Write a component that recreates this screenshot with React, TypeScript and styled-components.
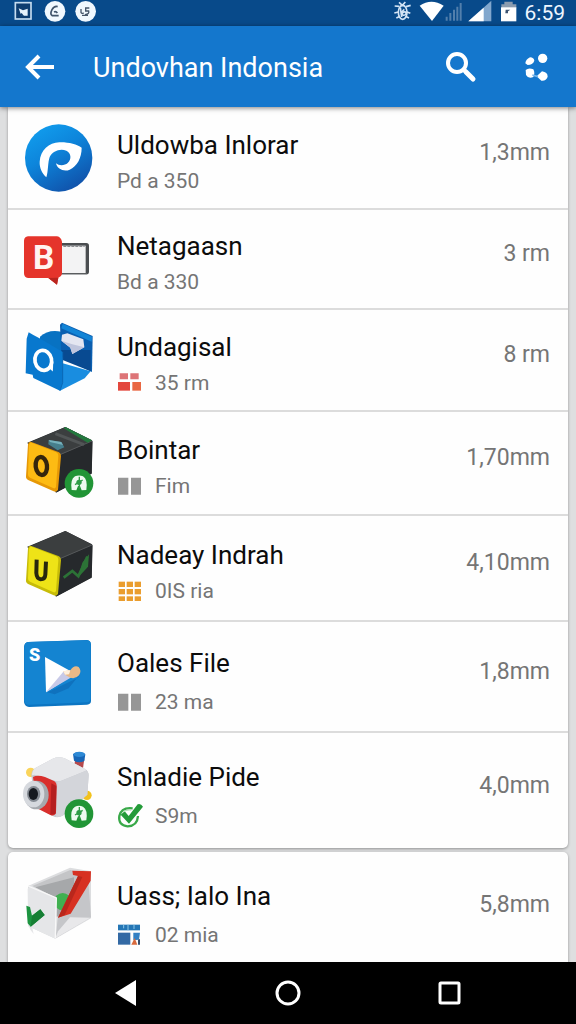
import React from 'react';
import styled, { createGlobalStyle } from 'styled-components';

const GlobalStyle = createGlobalStyle`
  *, *::before, *::after { box-sizing: border-box; }
  body {
    margin: 0;
    background: #dedfe0;
    font-family: Roboto, "Liberation Sans", sans-serif;
  }
`;

const Screen = styled.div`
  display: flex;
  flex-direction: column;
  height: 100vh;
  overflow: hidden;
`;

const StatusBar = styled.div`
  flex: none;
  display: flex;
  align-items: center;
  justify-content: space-between;
  height: 26px;
  padding: 0 11px 0 13px;
  background: #084a8a;
  color: #eef6ff;
`;

const StatusGroup = styled.div<{ $gap?: number }>`
  display: flex;
  align-items: center;
  gap: ${(p) => p.$gap ?? 0}px;
`;

const Clock = styled.time`
  width: 43px;
  text-align: right;
  font-size: 21px;
  line-height: 24px;
  white-space: nowrap;
`;

const AppBar = styled.header`
  flex: none;
  position: relative;
  z-index: 1;
  display: flex;
  align-items: center;
  height: 81px;
  padding: 0 15px 0 16px;
  background: #1477cd;
  box-shadow: 0 1px 5px rgba(0, 0, 0, 0.5);
  color: #fff;
`;

const AppTitle = styled.h1`
  flex: 1;
  margin: 0 0 0 29px;
  padding-top: 2px;
  font-size: 27px;
  line-height: 36px;
  font-weight: 400;
  white-space: nowrap;
`;

const IconButton = styled.button`
  display: grid;
  place-items: center;
  width: 48px;
  height: 48px;
  padding: 0;
  border: 0;
  background: none;
  color: inherit;
  cursor: pointer;
`;

const Actions = styled.div`
  display: flex;
  gap: 28px;
`;

const Content = styled.main`
  flex: 1;
  min-height: 0;
  overflow: hidden;
  padding: 0 8px;
`;

const Card = styled.ul<{ $first?: boolean }>`
  list-style: none;
  margin: 0 0 4px;
  padding: 0;
  border-radius: ${(p) => (p.$first ? '0 0 5px 5px' : '5px')};
  background: #fefefe;
  box-shadow: 0 1px 3px rgba(0, 0, 0, 0.35);
`;

const Row = styled.li<{ $height: number }>`
  display: flex;
  align-items: center;
  min-height: ${(p) => p.$height}px;
  padding: 0 18px 0 14px;

  & + & {
    border-top: 2px solid #dcdcdc;
  }
`;

const Labels = styled.div<{ $roomy?: boolean }>`
  flex: 1;
  min-width: 0;
  margin-left: 23px;
  padding-top: ${(p) => (p.$roomy ? 12 : 10)}px;
`;

const Name = styled.h2`
  margin: 0;
  font-size: 26px;
  line-height: 36px;
  font-weight: 400;
  color: #0c0c0c;
  white-space: nowrap;
`;

const Detail = styled.div<{ $roomy?: boolean }>`
  display: flex;
  align-items: center;
  gap: 12px;
  margin-top: ${(p) => (p.$roomy ? 3 : 0)}px;
  font-size: 21px;
  line-height: 36px;
  color: #757575;
  white-space: nowrap;
`;

const Size = styled.span`
  padding-bottom: 10px;
  font-size: 23px;
  line-height: 28px;
  color: #757575;
  white-space: nowrap;
`;

const Art = styled.svg`
  flex: none;
  overflow: visible;
`;

const NavBar = styled.nav`
  flex: none;
  position: relative;
  z-index: 1;
  display: grid;
  grid-template-columns: repeat(3, 1fr);
  justify-items: center;
  align-items: center;
  height: 62px;
  padding: 0 45px;
  background: #000;
  color: #fff;
`;

const glyphFont = 'Roboto, "Liberation Sans", sans-serif';

type ArtProps = { top: number; children: React.ReactNode };

const AppArt = ({ top, children }: ArtProps) => (
  <Art width="72" height="72" viewBox={`66 ${top} 216 216`} aria-hidden="true">{children}</Art>
);

const MiniArt = ({ top, children }: ArtProps) => (
  <Art width="26" height="26" viewBox={`351 ${top} 78 78`} aria-hidden="true">{children}</Art>
);

const PandoraIcon = () => (
  <AppArt top={50}>
    <defs>
      <linearGradient id="disc" x1="0" y1="0" x2="0.6" y2="1">
        <stop offset="0" stopColor="#12a3f2" />
        <stop offset="0.5" stopColor="#0d85db" />
        <stop offset="1" stopColor="#1055ad" />
      </linearGradient>
    </defs>
    <circle cx="176" cy="158" r="101" fill="url(#disc)" />
    <path
      fill="#fff"
      d="M139 216C126 203 118 187 119 169C121 134 147 112 178 111C204 110 231 117 245 127C245 158 231 183 209 193C193 200 171 192 168 174C177 182 195 181 203 173C216 160 213 143 199 136C181 128 157 137 149 155C143 173 145 198 139 216Z"
    />
  </AppArt>
);

const SpeechIcon = () => (
  <AppArt top={45}>
    <rect x="176" y="105" width="91" height="94" rx="8" fill="#4a4d50" />
    <path d="M180 113H257V195H180Z" fill="#f3f3f4" />
    <path d="M190 115H254" stroke="#8b8d90" strokeWidth="4" strokeDasharray="9 3" />
    <path d="M180 199H261" stroke="#a9abad" strokeWidth="3" />
    <path
      d="M84 85H171Q183 87 186 101V198Q184 207 175 209L171 230L145 210H84Q72 208 72 196V98Q73 86 84 85Z"
      fill="#e5342b"
    />
    <path d="M175 209L171 230L145 210Z" fill="#b9251f" />
    <text x="131" y="184" fontFamily={glyphFont} fontSize="100" fontWeight="700" textAnchor="middle" fill="#fff4f1">B</text>
  </AppArt>
);

const BlueBoxIcon = () => (
  <AppArt top={42}>
    <path d="M120 80Q145 57 184 65L194 130L120 130Z" fill="#0872c2" />
    <path d="M186 38L278 78L276 186L184 140L180 44Z" fill="#0b5fb0" />
    <path d="M188 41L276 80L275 95L184 55Z" fill="#1284d6" />
    <path d="M184 120L272 120L272 184L188 150Z" fill="#084a91" />
    <path d="M186 74L202 70L250 88L253 112L217 132L211 113L184 92Z" fill="#e4e6f1" />
    <path d="M217 132L211 113L184 92L217 103L253 112Z" fill="#bfc5dd" />
    <path d="M188 160L272 184L254 205L180 242Z" fill="#198de0" />
    <path d="M86 67L100 75L124 88L188 126V218L180 242L100 204L98 194L77 190L80 86Z" fill="#0878ce" />
    <path d="M188 126V218L180 242" fill="none" stroke="#0968b6" strokeWidth="3" />
    <g transform="rotate(-12 130 152)">
      <ellipse cx="130" cy="151" rx="25" ry="30" fill="none" stroke="#fff" strokeWidth="11" />
      <path d="M139 173L151 190L159 160Z" fill="#fff" />
    </g>
  </AppArt>
);

const GreenBadge = ({ cy }: { cy: number }) => (
  <g transform={`translate(237 ${cy})`}>
    <circle r="43" fill="#219536" />
    <path d="M-22 20Q-27-12-12-21Q0-26 12-21Q27-12 22 20L8 21L3 8L-3 8L-8 21Z" fill="#eefaf0" />
    <circle r="8" cy="-3" fill="#2e9c46" />
    <path d="M-12 4L11-10M1-20V16" stroke="#2e9c46" strokeWidth="4" />
  </g>
);

const DarkCube = ({ face, edge }: { face: string; edge: string }) => (
  <>
    <path d="M196 51L276 91L275 191L168 248L82 98Z" fill="#25282b" />
    <path d="M196 51L278 93L184 134L93 95Z" fill="#3b3e3f" />
    <path d="M184 134L278 93L275 190L170 247Z" fill="#26292c" />
    <path d="M97 98L182 133L276 93" fill="none" stroke="#55585a" strokeWidth="3" />
    <path d="M92 95L177 127Q184 131 183 139L174 239Q170 248 161 244L86 211Q77 207 78 199L84 103Q86 94 92 95Z" fill={edge} />
    <path d="M95 98L169 127Q176 130 175 138L168 230Q166 238 159 234L90 203Q83 200 84 193L87 106Q89 96 95 98Z" fill={face} />
  </>
);

const YellowCubeIcon = () => (
  <AppArt top={51}>
    <DarkCube face="#fdbb13" edge="#e69806" />
    <path d="M196 51L276 91L263 98L191 55Z" fill="#23783d" />
    <path d="M166 71L252 104" stroke="#515556" strokeWidth="9" />
    <path d="M146 90L184 96L193 112L173 121L145 103Z" fill="#467e8c" />
    <path d="M146 90L184 96L189 105L150 96Z" fill="#76b1bc" />
    <ellipse cx="124" cy="168" rx="17" ry="27" transform="rotate(-7 124 168)" fill="none" stroke="#35260c" strokeWidth="13" />
    <GreenBadge cy={220} />
  </AppArt>
);

const LimeCubeIcon = () => (
  <AppArt top={54}>
    <DarkCube face="#eee317" edge="#c7bc08" />
    <path d="M110 137L109 177Q110 194 122 196Q135 196 136 182L138 143" fill="none" stroke="#28270d" strokeWidth="12" />
    <path d="M191 191L217 171L235 187L262 128" fill="none" stroke="#2c7336" strokeWidth="8" />
    <path d="M247 146L267 121L264 158L235 190Z" fill="#2c7336" />
  </AppArt>
);

const PlayTileIcon = () => (
  <AppArt top={62}>
    <path d="M84 65L261 59Q272 60 273 72V242Q273 252 261 253L87 260Q74 258 72 245V79Q73 67 84 65Z" fill="#0c75c2" />
    <path d="M85 65L261 60Q271 60 272 71V232Q272 244 261 246L87 253Q74 252 73 241V79Q74 66 85 65Z" fill="#1484d1" />
    <path d="M143 216L234 172L241 160L206 204L164 222Z" fill="#0c66b0" opacity="0.6" />
    <text x="104" y="123" fontFamily={glyphFont} fontSize="54" fontWeight="900" textAnchor="middle" fill="#fff">S</text>
    <path d="M135 110L226 160L138 216Z" fill="#fff" />
    <path d="M138 216L190 154L222 166Z" fill="#c8cae8" />
    <path d="M190 153L211 150Q222 133 236 140Q246 151 237 165Q226 177 211 172L195 163Z" fill="#e9b987" />
    <path d="M190 153L211 150L207 162L195 163Z" fill="#fff0dd" />
  </AppArt>
);

const CameraIcon = () => (
  <AppArt top={71}>
    <circle cx="92" cy="123" r="14" fill="#fad45b" />
    <circle cx="261" cy="192" r="14" fill="#f2c21d" />
    <path d="M226 80L253 82L247 125L221 117Z" fill="#b5494c" />
    <path d="M219 68Q237 55 256 69L253 89Q237 97 222 88Z" fill="#1766b7" />
    <ellipse cx="238" cy="69" rx="17" ry="8" fill="#2d89d5" />
    <path d="M94 132Q95 116 106 110L158 82Q176 74 194 81L254 112Q266 118 266 132L262 190L190 252Q173 262 158 254L106 226Z" fill="#c7c9cf" />
    <path d="M96 132Q96 116 108 109L158 82Q176 74 194 81L254 112Q262 116 256 119L184 148Q174 152 164 148L104 130Z" fill="#e6e7ea" />
    <path d="M172 151Q178 151 184 148L258 118Q266 121 266 132L262 190L190 252Q180 258 168 256Z" fill="#d3d5da" />
    <path d="M99 137Q112 130 135 137L162 149Q171 154 170 168L168 243Q164 257 151 251L111 231Z" fill="#d92f2c" />
    <path d="M154 156L169 164L167 247L151 250Z" fill="#b51f20" />
    <ellipse cx="109" cy="191" rx="37" ry="43" fill="#a6a9ae" />
    <ellipse cx="101" cy="188" rx="32" ry="40" fill="#d6d9de" />
    <ellipse cx="101" cy="188" rx="20" ry="24" fill="#868c94" />
    <ellipse cx="100" cy="188" rx="14" ry="18" fill="#15191f" />
    <GreenBadge cy={247} />
  </AppArt>
);

const EnvelopeIcon = () => (
  <AppArt top={88}>
    <path d="M84 124L210 69L273 80V221L166 282L85 245Z" fill="#dcdddf" />
    <path d="M92 126L211 76L267 91L169 162Z" fill="#c4c5c7" />
    <path d="M106 128L222 98L223 204L169 216V160Z" fill="#a6a8aa" />
    <circle cx="188" cy="171" r="26" fill="#40b050" />
    <path d="M174 218L265 110L273 218L166 281Z" fill="#c5c6c9" />
    <path d="M174 260L210 218L271 219L166 281Z" fill="#e8e8ea" />
    <path d="M217 78L273 80L272 108L212 207L174 219L234 94L219 91Z" fill="#d73122" />
    <path d="M234 94L247 97L194 211L174 219Z" fill="#b9271c" />
    <path d="M92 122L169 160L166 282L97 250L101 268L92 257L84 240L83 132Z" fill="#e5e6e8" />
    <path d="M84 124L169 160L166 281" fill="none" stroke="#f8f8f8" strokeWidth="4" />
    <path d="M79 183L90 187L96 213L121 194L134 211L92 246L83 236Z" fill="#1c9440" />
    <path d="M96 213L121 194L134 211L92 246Z" fill="#167f34" />
  </AppArt>
);

const RedTiles = () => (
  <MiniArt top={180}>
    <path d="M359 190H384V208H359ZM391 190H416V208H391Z" fill="#dd7477" />
    <path d="M354 216H390V242H354Z" fill="#e3473d" />
    <path d="M397 216H423V242H397Z" fill="#e96742" />
  </MiniArt>
);

const GrayColumns = () => (
  <MiniArt top={188}>
    <path d="M354 202H385V253H354ZM393 202H423V253H393Z" fill="#969696" />
  </MiniArt>
);

const OrangeGrid = () => (
  <MiniArt top={193}>
    {[204, 226, 248].map((y) =>
      [356, 380, 404].map((x) => <rect key={`${x}-${y}`} x={x} y={y} width="19" height={y === 248 ? 14 : 16} fill="#ea9d2e" />),
    )}
  </MiniArt>
);

const GreenCheck = () => (
  <MiniArt top={211}>
    <path d="M398 227Q364 223 358 250Q354 278 383 281Q412 280 414 250" fill="none" stroke="#39a949" strokeWidth="7" />
    <path d="M362 246L374 236L386 250L413 215Q422 211 429 222L387 273Z" fill="#249b39" />
    <path d="M370 237Q382 230 394 232" fill="none" stroke="#b4e0b9" strokeWidth="4" />
  </MiniArt>
);

const BlueBlocks = () => (
  <MiniArt top={230}>
    <path d="M354 238H420V255H354Z" fill="#2476b5" />
    <path d="M371 238V249M384 238V255M402 238V251" stroke="#8bc7e8" strokeWidth="3" />
    <path d="M354 262H391V298H354Z" fill="#3369a4" />
    <path d="M400 262H420L417 283L400 285Z" fill="#3280c4" />
    <path d="M394 298L404 278L412 298Z" fill="#d86a3d" />
    <path d="M414 283L420 281V298H414Z" fill="#354f6f" />
  </MiniArt>
);

type Item = {
  name: string;
  detail: string;
  size: string;
  height: number;
  roomy?: boolean;
  Icon: () => React.ReactElement;
  Mini?: () => React.ReactElement;
};

const downloads: Item[] = [
  { name: 'Uldowba Inlorar', detail: 'Pd a 350', size: '1,3mm', height: 101, Icon: PandoraIcon },
  { name: 'Netagaasn', detail: 'Bd a 330', size: '3 rm', height: 100, Icon: SpeechIcon },
  { name: 'Undagisal', detail: '35 rm', size: '8 rm', height: 102, Icon: BlueBoxIcon, Mini: RedTiles },
  { name: 'Bointar', detail: 'Fim', size: '1,70mm', height: 104, Icon: YellowCubeIcon, Mini: GrayColumns },
  { name: 'Nadeay Indrah', detail: '0IS ria', size: '4,10mm', height: 106, Icon: LimeCubeIcon, Mini: OrangeGrid },
  { name: 'Oales File', detail: '23 ma', size: '1,8mm', height: 111, roomy: true, Icon: PlayTileIcon, Mini: GrayColumns },
  { name: 'Snladie Pide', detail: 'S9m', size: '4,0mm', height: 117, roomy: true, Icon: CameraIcon, Mini: GreenCheck },
];

const older: Item[] = [
  { name: 'Uass; Ialo Ina', detail: '02 mia', size: '5,8mm', height: 115, roomy: true, Icon: EnvelopeIcon, Mini: BlueBlocks },
];

const ItemRow = ({ name, detail, size, height, roomy, Icon, Mini }: Item) => (
  <Row $height={height}>
    <Icon />
    <Labels $roomy={roomy}>
      <Name>{name}</Name>
      <Detail $roomy={roomy}>
        {Mini && <Mini />}
        <span>{detail}</span>
      </Detail>
    </Labels>
    <Size>{size}</Size>
  </Row>
);

const StatusIcons = () => (
  <>
    <svg width="25" height="26" viewBox="309 0 75 78" aria-hidden="true">
      <g fill="none" stroke="#d3e4f5" strokeWidth="5">
        <path d="M333 7L343 16L352 6M320 18L334 19M368 16L354 20M319 39L331 36M367 40L357 36M325 54L336 49M363 54L353 49" />
        <ellipse cx="344" cy="37" rx="13" ry="21" />
        <path d="M337 23L341 51M349 28Q339 35 344 45Q353 48 355 38Q350 33 343 39" />
      </g>
    </svg>
    <svg width="29" height="26" viewBox="384 0 87 78" aria-hidden="true">
      <path d="M395 17Q430-6 467 17L432 63Z" fill="#fff" />
    </svg>
    <svg width="19" height="26" viewBox="471 0 57 78" aria-hidden="true">
      <path d="M476 50V62M487 39V62M498 29V62M508 20V62M518 9V62" stroke="#527fac" strokeWidth="6" />
    </svg>
    <svg width="32" height="26" viewBox="528 0 96 78" aria-hidden="true">
      <path d="M541 64L610 2V64Z" fill="#82a7cd" />
      <path d="M541 64L587 23V64Z" fill="#fff" />
    </svg>
    <svg width="26" height="26" viewBox="624 0 78 78" aria-hidden="true">
      <path d="M640 13H649V5H674V13H685V25H640Z" fill="#8b9caf" />
      <path d="M639 22H685V64H639Z" fill="#fff" />
      <path d="M653 29H667L660 34V40H652Z" fill="#3b5270" />
    </svg>
  </>
);

export default function App() {
  return (
    <>
      <GlobalStyle />
      <Screen>
        <StatusBar>
          <StatusGroup $gap={9}>
            <svg width="22" height="26" viewBox="39 0 66 78" aria-hidden="true">
              <rect x="46" y="8" width="47" height="49" fill="#0d3d70" stroke="#c5dcef" strokeWidth="5" />
              <path d="M56 25L69 31L83 26V47H64Z" fill="#e7f2fb" />
              <path d="M56 47L65 39L72 48Z" fill="#0d3d70" />
            </svg>
            <svg width="22" height="26" viewBox="132 0 66 78" aria-hidden="true">
              <circle cx="165" cy="34" r="31" fill="#f1f8fe" />
              <path d="M173 20Q163 17 156 29Q149 43 157 47H176M162 36Q168 33 172 39" fill="none" stroke="#41546b" strokeWidth="5" />
            </svg>
            <svg width="22" height="26" viewBox="225 0 66 78" aria-hidden="true">
              <circle cx="257" cy="34" r="31" fill="#f1f8fe" />
              <path d="M243 27V37Q246 43 251 38M268 24H257V33H266Q269 43 255 44M246 46H264" fill="none" stroke="#46566a" strokeWidth="4" />
            </svg>
          </StatusGroup>
          <StatusGroup>
            <StatusIcons />
            <Clock>6:59</Clock>
          </StatusGroup>
        </StatusBar>

        <AppBar>
          <IconButton aria-label="Back">
            <svg width="32" height="28" viewBox="0 0 32 28" fill="none" stroke="currentColor" strokeWidth="4">
              <path d="M15 3L4 14L15 25M4 14H30" />
            </svg>
          </IconButton>
          <AppTitle>Undovhan Indonsia</AppTitle>
          <Actions>
            <IconButton aria-label="Search">
              <svg width="32" height="32" viewBox="0 0 32 32" fill="none" stroke="currentColor">
                <circle cx="12" cy="12" r="9" strokeWidth="4" />
                <path d="M18 18L21 21" strokeWidth="4" />
                <path d="M21 21L28 28" strokeWidth="5" strokeLinecap="round" />
              </svg>
            </IconButton>
            <IconButton aria-label="More options">
              <svg width="28" height="30" viewBox="708 156 84 90" fill="currentColor">
                <circle cx="767" cy="175" r="14" />
                <path d="M715 190Q716 178 729 172Q741 173 742 182Q737 195 722 195Z" />
                <path d="M716 210Q725 202 739 208Q745 219 739 231Q725 238 717 225Z" />
                <path d="M749 229L765 214Q782 217 782 230Q777 244 763 242Z" />
                <path d="M736 225L753 230" stroke="#75b5eb" strokeWidth="5" />
              </svg>
            </IconButton>
          </Actions>
        </AppBar>

        <Content>
          <Card $first>
            {downloads.map((item) => <ItemRow key={item.name} {...item} />)}
          </Card>
          <Card>
            {older.map((item) => <ItemRow key={item.name} {...item} />)}
          </Card>
        </Content>

        <NavBar aria-label="System">
          <IconButton aria-label="Back">
            <svg width="24" height="28" viewBox="0 0 24 28"><path d="M1 14L22 1V27Z" fill="currentColor" /></svg>
          </IconButton>
          <IconButton aria-label="Home">
            <svg width="28" height="28" viewBox="0 0 28 28"><circle cx="14" cy="14" r="11" fill="none" stroke="currentColor" strokeWidth="3" /></svg>
          </IconButton>
          <IconButton aria-label="Recent apps">
            <svg width="24" height="24" viewBox="0 0 24 24"><rect x="2" y="2" width="19" height="20" rx="1" fill="none" stroke="currentColor" strokeWidth="3" /></svg>
          </IconButton>
        </NavBar>
      </Screen>
    </>
  );
}
